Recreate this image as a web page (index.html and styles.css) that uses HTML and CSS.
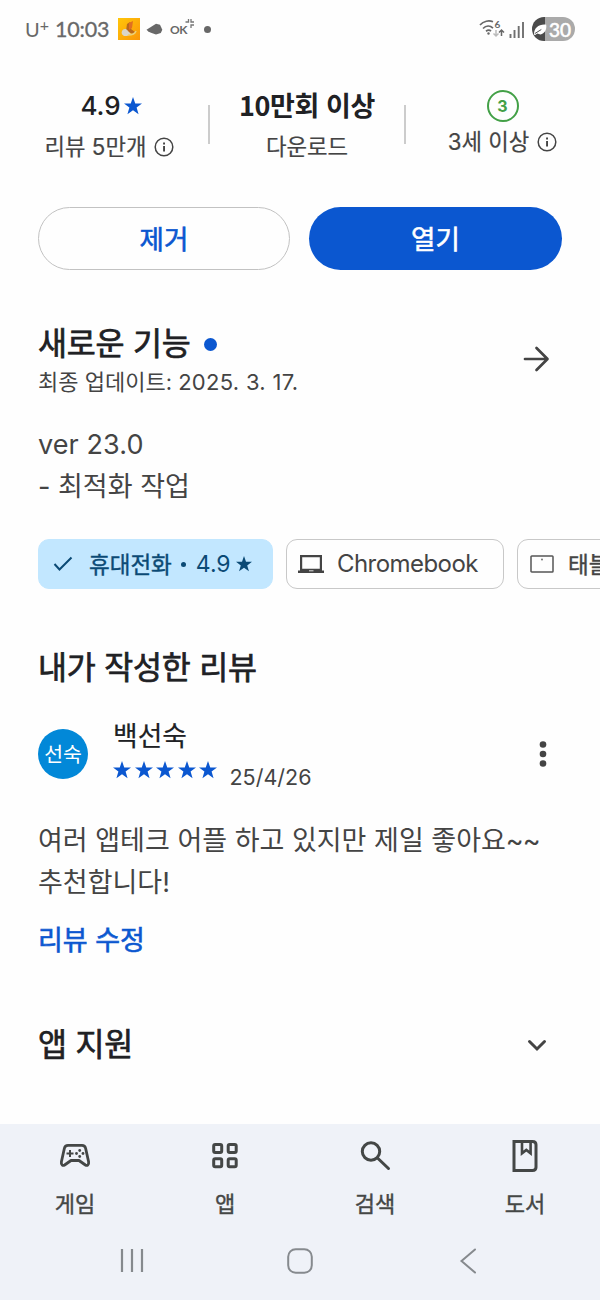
FILE: index.html
```
<!DOCTYPE html>
<html lang="ko">
<head>
<meta charset="utf-8">
<title>앱 정보</title>
<link rel="stylesheet" href="styles.css">
</head>
<body>
<svg class="defs" width="0" height="0">
  <symbol id="star" viewBox="0 0 20 20"><path d="M10 0l2.500 7.200 7.500.1-6 4.500 2.200 7.400L10 14.700l-6.200 4.500L6 11.800 0 7.300l7.500-.1z"/></symbol>
  <symbol id="info" viewBox="0 0 20 20"><circle cx="10" cy="10" r="8.800" fill="none" stroke="currentColor" stroke-width="1.500"/><path d="M9.100 9h1.900v5.500H9.100zM9.100 5.600h1.900v1.900H9.100z"/></symbol>
</svg>
<div class="screen">
  <header class="status">
    <span class="carrier">U<sup>+</sup></span>
    <span class="clock">10:03</span>
    <svg class="app-badge" width="22" height="22" viewBox="0 0 22 22"><defs><linearGradient id="gold" x2="1" y2="1"><stop stop-color="#ffc60a"/><stop offset="1" stop-color="#fb9608"/></linearGradient></defs><path fill="url(#gold)" d="M0 0h22v22H0z"/><path fill="#b9681b" d="M9 6l3-2 2 2-1 5 4 3-2 2-7-3z"/><path fill="#e06f22" d="M11 5l4-2-1 7-3 2z"/><path fill="#d9d5c8" d="M4 13c1-2 4-3 6 0l3 3-4 2H6c-2-1-3-3-2-5z"/><path fill="none" stroke="#ead079" stroke-width="1.500" d="M10 17c4 0 7-1 8-4"/></svg>
    <svg class="cap" width="17" height="12" viewBox="0 0 17 12"><path fill="#686868" d="M.5 6.800L10 .8l4 1 2.300 5-1.500 3.200-4.800 1.500C6 10.500 2 9 .5 6.800z"/></svg>
    <span class="ok">OK</span>
    <svg class="spark" width="10" height="10" viewBox="0 0 10 10"><path fill="none" stroke="#777" stroke-width="1.300" d="M3.500 0v3H.5M6 0v3h3M6 9V6h3"/></svg>
    <i class="more-dot"></i>
    <svg class="wifi" width="26" height="20" viewBox="0 0 26 20"><g fill="none" stroke="#686868" stroke-width="1.700"><path d="M1 6C4.500 2 10 1 14 2.800M4 9.500c3-3 7-3.200 10-.4M7 12.200c2-1.500 3.500-1.500 5 0"/><path stroke-width="1.500" d="M22.500 17v-6m-2.500 2.500l2.500-2.500 2.500 2.500"/><path stroke="#bbb" stroke-width="1.500" d="M17 11v6m-2.500-2.500L17 17l2.500-2.500"/></g><circle cx="9.500" cy="14.500" r="1.200" fill="#686868"/><text x="15.500" y="9" class="wifi-gen">6</text></svg>
    <svg class="signal" width="16" height="17" viewBox="0 0 16 17"><path stroke="#707070" stroke-width="1.900" d="M1.500 17v-4M5.500 17V9M9.700 17V5M14 17V1"/></svg>
    <span class="battery"><svg width="18" height="16" viewBox="0 0 18 16"><path fill="#fff" d="M1 14C1 6 7 1 16 2c1 6-2 11-7 12l-4-1-3 2z"/><path fill="none" stroke="#4b4b4b" stroke-width="1.200" d="M2 13l8-5"/></svg><span>30</span></span>
  </header>

  <section class="stats">
    <div class="stat reviews">
      <div class="stat-value">4.9<svg class="rate-star"><use href="#star"/></svg></div>
      <div class="stat-label">리뷰 5만개<svg class="info"><use href="#info"/></svg></div>
    </div>
    <div class="stat downloads">
      <div class="stat-value">10만회 이상</div>
      <div class="stat-label">다운로드</div>
    </div>
    <div class="stat age">
      <div class="age-mark">3</div>
      <div class="stat-label">3세 이상<svg class="info"><use href="#info"/></svg></div>
    </div>
  </section>

  <div class="actions">
    <div class="btn outline">제거</div>
    <div class="btn filled">열기</div>
  </div>

  <section class="news">
    <div class="news-head">
      <div>
        <h2>새로운 기능<i class="new-dot"></i></h2>
        <p class="updated">최종 업데이트: <span class="day">2025. 3. 17.</span></p>
      </div>
      <svg class="arrow" width="26" height="26" viewBox="0 0 26 26"><path fill="none" stroke="#444" stroke-width="2.700" stroke-linecap="round" stroke-linejoin="round" d="M2 13h22M13.500 2L24.500 13l-11 11"/></svg>
    </div>
    <p class="notes"><span class="version">ver 23.0</span><br><span class="change">- 최적화 작업</span></p>
  </section>

  <div class="chips">
    <div class="chip selected">
      <svg width="20" height="16" viewBox="0 0 20 16"><path fill="none" stroke="#0b4a75" stroke-width="2" d="M1.500 8l5 5.500L18.500 1.500"/></svg>
      <span class="chip-text">휴대전화</span><i class="sep"></i><span class="score">4.9</span><svg class="chip-star"><use href="#star"/></svg>
    </div>
    <div class="chip laptop">
      <svg width="26" height="20" viewBox="0 0 26 20"><path fill="#444" fill-rule="evenodd" d="M2 1h22v15.500h2V19H0v-2.500h2zM4.200 3.200v11.600h17.600V3.200z"/><path stroke="#ddd" d="M11 16.800h4.500"/></svg>
      <span class="latin">Chromebook</span>
    </div>
    <div class="chip tablet">
      <svg width="24" height="18" viewBox="0 0 24 18"><rect x="1" y="1" width="22" height="16" rx=".8" fill="none" stroke="#555" stroke-width="1.500"/><circle cx="12" cy="4.500" r=".9" fill="#666"/></svg>
      <span class="chip-text">태블릿</span>
    </div>
  </div>

  <section class="mine">
    <h2>내가 작성한 리뷰</h2>
    <div class="reviewer">
      <div class="avatar">선숙</div>
      <div class="who">
        <div class="name">백선숙</div>
        <div class="rating">
          <svg><use href="#star"/></svg><svg><use href="#star"/></svg><svg><use href="#star"/></svg><svg><use href="#star"/></svg><svg><use href="#star"/></svg>
          <span class="date">25/4/26</span>
        </div>
      </div>
      <svg class="kebab" width="8" height="28" viewBox="0 0 8 28"><g fill="#444"><circle cx="4" cy="4.500" r="3.300"/><circle cx="4" cy="14" r="3.300"/><circle cx="4" cy="23.500" r="3.300"/></g></svg>
    </div>
    <p class="body">여러 앱테크 어플 하고 있지만 제일 좋아요<span class="tilde">~~</span><br>추천합니다!</p>
    <div class="edit">리뷰 수정</div>
  </section>

  <section class="support">
    <h2>앱 지원</h2>
    <svg width="20" height="14" viewBox="0 0 20 14"><path fill="none" stroke="#444" stroke-width="3" stroke-linecap="round" d="M2.500 3.500L10 11l7.500-7.500"/></svg>
  </section>

  <footer class="bottom">
    <nav class="tabs">
      <div class="tab"><svg width="34" height="34" viewBox="0 0 34 34"><path fill="none" stroke="#444746" stroke-width="2.800" stroke-linejoin="round" d="M10 6.300h14c2 0 3.200 1.200 3.600 3l3 13.500c.5 3-1.400 4.300-3.200 3.200L21 21.500h-8L6.600 26c-1.800 1.100-3.700-.2-3.200-3.200l3-13.500c.4-1.800 1.600-3 3.600-3z"/><path stroke="#444746" stroke-width="2" d="M8.500 14.500h7M12 11v7"/><g fill="#444746"><circle cx="21.700" cy="11.500" r="1.400"/><circle cx="21.700" cy="17.500" r="1.400"/><circle cx="18.500" cy="14.500" r="1.400"/><circle cx="25" cy="14.500" r="1.400"/></g></svg><span>게임</span></div>
      <div class="tab"><svg width="34" height="34" viewBox="0 0 34 34"><g fill="none" stroke="#444746" stroke-width="3"><rect x="5.700" y="5.500" width="8" height="8" rx="1.500"/><rect x="20.200" y="5.500" width="8" height="8" rx="1.500"/><rect x="5.700" y="19.700" width="8" height="8" rx="1.500"/><rect x="20.200" y="19.700" width="8" height="8" rx="1.500"/></g></svg><span>앱</span></div>
      <div class="tab"><svg width="34" height="34" viewBox="0 0 34 34"><g fill="none" stroke="#444746" stroke-width="3"><circle cx="13" cy="12.500" r="8.700"/><path stroke-linecap="round" d="M19.500 19l11 10.500"/></g></svg><span>검색</span></div>
      <div class="tab"><svg width="34" height="34" viewBox="0 0 34 34"><g fill="none" stroke="#444746" stroke-width="3"><path d="M6 2.500h18.500c2 0 3.500 1.300 3.500 3.200v22.600c0 1.900-1.500 3.200-3.500 3.200H6z"/><path stroke-width="2.600" d="M14 3v11.300l4.300-3.400 4.300 3.400V3"/></g></svg><span>도서</span></div>
    </nav>
    <div class="system">
      <svg width="26" height="26" viewBox="0 0 26 26"><path stroke="#868a8e" stroke-width="2.200" d="M3 1v23M13 1v23M23 1v23"/></svg>
      <svg width="26" height="26" viewBox="0 0 26 26"><rect x="1.200" y="1.200" width="23.600" height="23.600" rx="7.500" fill="none" stroke="#868a8e" stroke-width="2"/></svg>
      <svg width="26" height="26" viewBox="0 0 26 26"><path fill="none" stroke="#868a8e" stroke-width="2" stroke-linecap="round" d="M20 1.500L6.500 13 20 24.500"/></svg>
    </div>
  </footer>
</div>
</body>
</html>
```
FILE: styles.css
```
* { box-sizing: border-box; }
body, h2, p { margin: 0; }
body {
  width: 600px;
  height: 1300px;
  overflow: hidden;
  background: #fefefe;
  color: #444;
  font-family: Inter, "Noto Sans CJK KR", sans-serif;
}
svg { display: block; flex: none; overflow: visible; fill: currentColor; }
.defs { position: absolute; }
.screen { display: flex; flex-direction: column; width: 600px; height: 1300px; overflow: hidden; }

.status { display: flex; align-items: center; height: 58px; padding: 0 25px; color: #686868; font-family: Lato, sans-serif; }
.carrier { width: 30px; font-size: 20px; line-height: 24px; }
.carrier sup { font-size: 16px; line-height: 0; vertical-align: 6px; }
.clock { width: 62px; font-size: 21.500px; line-height: 24px; letter-spacing: -.2px; -webkit-text-stroke: .3px; }
.cap { margin-left: 6px; }
.app-badge { margin-left: 1px; }
.ok { width: 17px; margin-left: 7px; font-size: 12px; font-weight: 700; letter-spacing: -.5px; }
.spark { margin: -10px 0 0 -2px; }
.more-dot { width: 7px; height: 7px; margin-left: 9px; border-radius: 50%; background: #686868; }
.wifi { margin-left: auto; }
.wifi-gen { font: 700 10px Lato, sans-serif; fill: #686868; }
.signal { margin: 0 7px 0 4px; }
.battery { display: flex; align-items: center; width: 43px; height: 24px; padding-left: 1px; border-radius: 12px; color: #fff; font-size: 19px; background: linear-gradient(90deg, #4b4b4b 13px, #aaa 13px); -webkit-text-stroke: .6px; }
.battery svg { width: 15px; height: 13px; margin-right: 1px; }

.stats { display: grid; grid-template-columns: 209px 196px 195px; height: 149px; padding-top: 32px; }
.stat { position: relative; display: flex; flex-direction: column; align-items: center; }
.stat + .stat::before { content: ""; position: absolute; left: -1px; top: 15px; width: 1.500px; height: 39px; background: #ccc; }
.stat-value { display: flex; align-items: center; height: 32px; color: #202124; font-size: 26px; font-weight: 500; line-height: 32px; }
.reviews .stat-value { margin-left: 13px; }
.downloads .stat-value { margin-top: -1px; font-family: "Noto Sans CJK KR", sans-serif; font-size: 27px; font-weight: 700; letter-spacing: -.4px; }
.stat-label { display: flex; align-items: center; height: 32px; margin-top: 9px; font-size: 22.300px; line-height: 32px; -webkit-text-stroke: .2px; }
.downloads .stat-label { margin-top: 10px; }
.reviews .stat-label { margin-left: 10px; }
.rate-star { width: 18px; height: 18px; margin-left: 3px; color: #0b57d0; }
.info { width: 20px; height: 20px; margin-left: 8px; }
.age-mark { width: 32px; height: 32px; border: 2px solid #43a047; border-radius: 50%; color: #43a047; font-size: 16px; font-weight: 700; line-height: 28px; text-align: center; }
.age .stat-label { margin-top: 4px; }

.actions { display: grid; grid-template-columns: 252px 253px; gap: 19px; padding: 0 38px; }
.btn { height: 63px; border-radius: 32px; font-size: 26.500px; line-height: 64px; text-align: center; -webkit-text-stroke: .6px; }
.outline { border: 1.500px solid #c2c2c2; color: #0b57d0; line-height: 62px; }
.filled { background: #0b57d0; color: #fff; }

h2 { color: #202124; font-size: 31.500px; font-weight: 400; line-height: 40px; letter-spacing: -.2px; -webkit-text-stroke: .7px; }
.news { padding: 54px 51px 0 38px; }
.news-head { display: flex; align-items: center; justify-content: space-between; height: 76px; }
.news h2 { display: flex; align-items: center; }
.new-dot { width: 13px; height: 13px; margin-left: 13px; border-radius: 50%; background: #0b57d0; }
.arrow { margin-bottom: 6px; }
.updated { font-size: 22px; line-height: 36px; white-space: nowrap; }
.day { letter-spacing: .3px; }
.notes { margin-top: 24px; font-size: 27px; line-height: 42px; }
.version { letter-spacing: .1px; }

.chips { display: flex; gap: 13px; height: 50px; margin: 31px 0 0 38px; }
.chip { display: flex; align-items: center; flex: none; border: 1.500px solid #c8c8c8; border-radius: 11px; font-size: 22.500px; line-height: 46px; white-space: nowrap; }
.chip-text { padding-top: 1px; -webkit-text-stroke: .4px; }
.selected { width: 235px; padding-left: 14px; border-color: #c2e7ff; background: #c2e7ff; color: #0b4a75; }
.selected .chip-text { margin-left: 16px; }
.sep { width: 5px; height: 5px; margin-left: 9px; border-radius: 50%; background: currentColor; }
.score { margin-left: 10px; font-size: 23px; }
.chip-star { width: 16px; height: 16px; margin-left: 5px; }
.laptop { width: 218px; padding-left: 11px; }
.latin { margin-left: 13px; font-size: 24px; letter-spacing: -.55px; }
.tablet { width: 150px; padding-left: 12px; }
.tablet .chip-text { margin-left: 14px; }

.mine { padding: 59px 38px 0; }
.reviewer { display: flex; align-items: center; height: 66px; margin-top: 33px; }
.avatar { width: 50px; height: 50px; border-radius: 50%; background: #0288d8; color: #fff; font-size: 20.500px; line-height: 52px; text-align: center; }
.who { margin-left: 25px; }
.name { color: #202124; font-size: 26.800px; line-height: 32px; -webkit-text-stroke: .2px; }
.rating { display: flex; align-items: center; gap: 3.500px; height: 36px; }
.rating svg { width: 18px; height: 18px; color: #0b57d0; }
.date { margin: 13px 0 0 9px; font-size: 21.500px; line-height: 28px; }
.kebab { margin: 0 15px 0 auto; }
.body { margin-top: 33px; font-size: 27px; line-height: 42px; white-space: nowrap; }
.tilde { letter-spacing: -1px; }
.edit { margin-top: 17px; color: #0b57d0; font-size: 27px; line-height: 40px; -webkit-text-stroke: .6px; }

.support { display: flex; align-items: center; justify-content: space-between; margin-top: 64px; padding: 0 53px 0 38px; }

.bottom { height: 176px; margin-top: auto; background: #eff2f8; }
.tabs { display: grid; grid-template-columns: repeat(4, 150px); padding-top: 15px; }
.tab { display: flex; flex-direction: column; align-items: center; color: #444746; font-size: 22px; line-height: 32px; -webkit-text-stroke: .4px; }
.tab span { margin-top: 15px; }
.system { display: flex; justify-content: space-between; margin-top: 28px; padding: 0 119px; }
```
